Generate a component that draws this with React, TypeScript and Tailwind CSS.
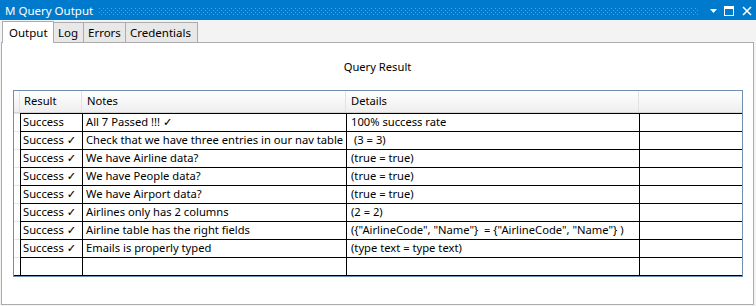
const ROWS: { result: string; notes: string; details: string }[] = [
  { result: 'Success', notes: 'All 7 Passed !!! ✓', details: '100% success rate' },
  { result: 'Success ✓', notes: 'Check that we have three entries in our nav table', details: ' (3 = 3)' },
  { result: 'Success ✓', notes: 'We have Airline data?', details: '(true = true)' },
  { result: 'Success ✓', notes: 'We have People data?', details: '(true = true)' },
  { result: 'Success ✓', notes: 'We have Airport data?', details: '(true = true)' },
  { result: 'Success ✓', notes: 'Airlines only has 2 columns', details: '(2 = 2)' },
  { result: 'Success ✓', notes: 'Airline table has the right fields', details: '({"AirlineCode", "Name"}  = {"AirlineCode", "Name"} )' },
  { result: 'Success ✓', notes: 'Emails is properly typed', details: '(type text = type text)' },
  { result: '', notes: '', details: '' },
]

const TABS: { label: string; w: string }[] = [
  { label: 'Output', w: 'w-[52px]' },
  { label: 'Log', w: 'w-[30px]' },
  { label: 'Errors', w: 'w-[42px]' },
  { label: 'Credentials', w: 'w-[72px]' },
]

function TitleBar() {
  return (
    <div className="h-[20px] bg-[#007acc] flex items-center text-white pt-[1px]">
      <span className="pl-[5px] text-[11.5px] leading-none w-[99px] shrink-0">M Query Output</span>
      {/* grip dots */}
      <svg className="w-[600px] h-[8px] shrink-0" viewBox="0 0 600 8">
        <defs>
          <pattern id="grip" width="4" height="4" patternUnits="userSpaceOnUse">
            <rect x="0" y="1" width="1" height="1" fill="#4ea2e4" />
            <rect x="2" y="3" width="1" height="1" fill="#4ea2e4" />
          </pattern>
        </defs>
        <rect width="600" height="8" fill="url(#grip)" />
      </svg>
      <div className="flex items-center ml-[10px] gap-[6px]">
        <svg className="w-[9px] h-[9px]" viewBox="0 0 9 9">
          <path d="M1 3h7L4.5 7z" fill="#fff" />
        </svg>
        <svg className="w-[10px] h-[10px]" viewBox="0 0 10 10">
          <rect x="0.5" y="0.5" width="9" height="9" fill="none" stroke="#fff" />
          <rect x="0" y="0" width="10" height="3" fill="#fff" />
        </svg>
        <svg className="w-[10px] h-[10px] ml-[2px]" viewBox="0 0 10 10">
          <path d="M1 1l8 8M9 1l-8 8" stroke="#fff" strokeWidth="1.6" />
        </svg>
      </div>
    </div>
  )
}

function Tabs() {
  return (
    <div className="h-[22px] flex items-end pl-[2px] relative z-10 text-[11.5px]">
      {TABS.map((t, i) =>
        i === 0 ? (
          <div key={t.label} className={`h-[22px] ${t.w} pl-[6px] bg-white border border-b-0 border-[#acacac] flex items-center -mb-[1px] pt-[1px]`}>
            {t.label}
          </div>
        ) : (
          <div key={t.label} className={`h-[20px] ${t.w} pl-[4px] bg-[#e8e8e8] border border-l-0 border-b-0 border-[#acacac] flex items-center pt-[1px]`}>
            {t.label}
          </div>
        )
      )}
    </div>
  )
}

function Grid() {
  return (
    <div className="ml-[11px] w-[730px] border border-[#6f8fb4] bg-white text-[11.2px] text-black">
      {/* header */}
      <div className="flex h-[22px] bg-gradient-to-b from-white to-[#eeeeee] border-b border-[#d5d5d5]">
        <div className="w-[6px] border-r border-[#e2e2e2]" />
        <div className="w-[62px] pl-[4px] flex items-center border-r border-[#e2e2e2]">Result</div>
        <div className="w-[264px] pl-[5px] flex items-center border-r border-[#e2e2e2]">Notes</div>
        <div className="w-[293px] pl-[5px] flex items-center border-r border-[#e2e2e2]">Details</div>
        <div className="flex-1" />
      </div>
      {ROWS.map((r, i) => (
        <div
          key={i}
          className={`flex ${i === ROWS.length - 1 ? 'h-[19px] border-b border-black' : 'h-[18px]'}`}
        >
          <div className="w-[6px] border-t border-[#e4e4e4]" />
          <div className="w-[62px] pl-[2px] border-t border-l border-black flex items-center whitespace-nowrap overflow-hidden">
            {r.result}
          </div>
          <div className="w-[264px] pl-[3px] border-t border-l border-black flex items-center whitespace-pre overflow-hidden">
            {r.notes}
          </div>
          <div className="w-[293px] pl-[4px] border-t border-l border-black flex items-center whitespace-pre overflow-hidden">
            {r.details}
          </div>
          <div className="flex-1 border-t border-l border-black" />
        </div>
      ))}
    </div>
  )
}

export default function App() {
  return (
    <div
      className="w-[756px] h-[306px] bg-[#f3f3f3] flex flex-col overflow-hidden"
      style={{ fontFamily: '"Noto Sans", "DejaVu Sans", sans-serif' }}
    >
      <TitleBar />
      <Tabs />
      <div className="ml-[1px] mr-[2px] h-[263px] bg-white border border-[#acacac]">
        <div className="h-[47px] flex items-center justify-center text-[11.2px] text-black pt-[1px]">Query Result</div>
        <Grid />
      </div>
    </div>
  )
}
